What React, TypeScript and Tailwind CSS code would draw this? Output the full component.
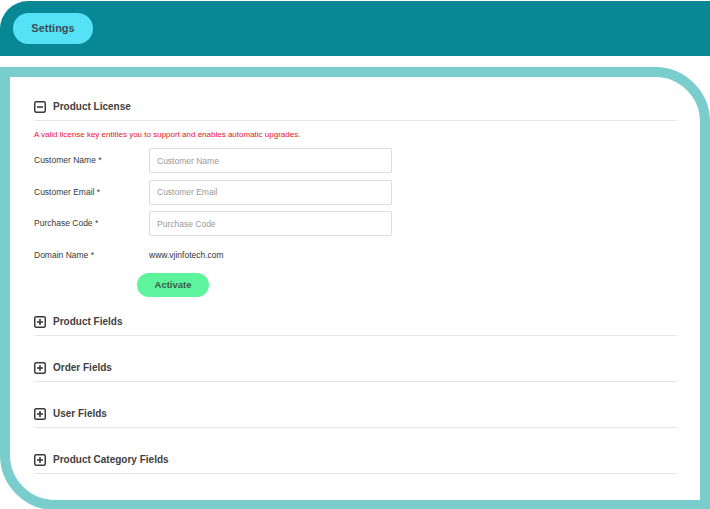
import React from "react";

function BoxIcon({ open }: { open?: boolean }) {
  return (
    <svg width="12" height="12" viewBox="0 0 12 12" className="shrink-0">
      <rect x="0.75" y="0.75" width="10.5" height="10.5" rx="1.5" fill="white" stroke="#3a3a3a" strokeWidth="1.5" />
      <path d="M3 6h6" stroke="#3a3a3a" strokeWidth="1.6" />
      {!open && <path d="M6 3v6" stroke="#3a3a3a" strokeWidth="1.6" />}
    </svg>
  );
}

function SectionHead({ title, open, pt }: { title: string; open?: boolean; pt: string }) {
  return (
    <div className={`flex items-center gap-[7px] ${pt} pb-[5px] border-b border-[#e6e6e6]`}>
      <BoxIcon open={open} />
      <span className="text-[10px] leading-[16px] font-bold text-[#404040]">{title}</span>
    </div>
  );
}

const fields = [
  { label: "Customer Name *", placeholder: "Customer Name" },
  { label: "Customer Email *", placeholder: "Customer Email" },
  { label: "Purchase Code *", placeholder: "Purchase Code" },
];

export default function App() {
  return (
    <div className="w-[710px] h-[509px] overflow-hidden bg-white font-['Liberation_Sans',Arial,sans-serif]">
      {/* Header */}
      <div className="mt-px h-[55px] bg-[#088795] rounded-tl-[28px] flex items-center pl-[13px]">
        <button className="w-[80px] h-[31px] rounded-full bg-[#55e2f6] text-[11px] font-bold text-[#3b4d57]">
          Settings
        </button>
      </div>

      {/* Panel */}
      <div className="mt-[11px] border-[10px] border-[#7acdcd] rounded-tr-[55px] rounded-bl-[55px] bg-white pl-[24px] pr-[23px] pb-[26px]">
        <SectionHead title="Product License" open pt="pt-[22px]" />

        <p className="mt-[8px] text-[8px] leading-[12px] text-[#e8112d]">
          A valid license key entitles you to support and enables automatic upgrades.
        </p>

        <div className="mt-[7px] flex flex-col gap-[6.5px]">
          {fields.map((f) => (
            <div key={f.label} className="flex items-center h-[25px]">
              <label className="w-[115px] text-[8.5px] text-[#383838]">{f.label}</label>
              <input
                placeholder={f.placeholder}
                className="w-[243px] h-[25px] border border-[#dcdcdc] rounded-[2px] px-[7px] text-[8.5px] text-[#333] placeholder:text-[#9a9a9a] outline-none"
              />
            </div>
          ))}
          <div className="flex items-center h-[25px]">
            <span className="w-[115px] text-[8.5px] text-[#383838]">Domain Name *</span>
            <span className="text-[8.5px] text-[#333]">www.vjinfotech.com</span>
          </div>
        </div>

        <button className="mt-[5.5px] ml-[103px] w-[72px] h-[24px] rounded-full bg-[#5ef49e] text-[9.5px] font-bold text-[#3c5a4a]">
          Activate
        </button>

        <SectionHead title="Product Fields" pt="pt-[17px]" />
        <SectionHead title="Order Fields" pt="pt-[24px]" />
        <SectionHead title="User Fields" pt="pt-[24px]" />
        <SectionHead title="Product Category Fields" pt="pt-[24px]" />
      </div>
    </div>
  );
}
